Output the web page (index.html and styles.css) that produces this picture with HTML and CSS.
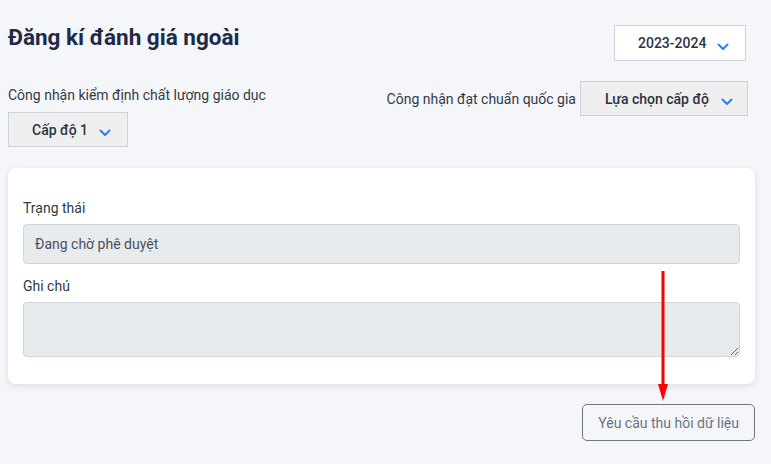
FILE: index.html
```html
<!DOCTYPE html>
<html lang="vi">
<head>
<meta charset="utf-8">
<title>Đăng kí đánh giá ngoài</title>
<link rel="stylesheet" href="styles.css">
</head>
<body>
<div class="page">
  <header class="head">
    <h1 class="title">Đăng kí đánh giá ngoài</h1>
    <div class="select select-white">
      <span>2023-2024</span>
      <svg class="chev" width="12" height="8" viewBox="0 0 12 8"><path d="M1.5 1.5 L6 6 L10.5 1.5" fill="none" stroke="#2f7ef5" stroke-width="2" stroke-linecap="round" stroke-linejoin="round"/></svg>
    </div>
  </header>

  <section class="filters">
    <div class="filter-left">
      <div class="flabel">Công nhận kiểm định chất lượng giáo dục</div>
      <div class="select select-grey sel-level">
        <span>Cấp độ 1</span>
        <svg class="chev" width="12" height="8" viewBox="0 0 12 8"><path d="M1.5 1.5 L6 6 L10.5 1.5" fill="none" stroke="#2f7ef5" stroke-width="2" stroke-linecap="round" stroke-linejoin="round"/></svg>
      </div>
    </div>
    <div class="filter-right">
      <div class="flabel">Công nhận đạt chuẩn quốc gia</div>
      <div class="select select-grey sel-choose">
        <span>Lựa chọn cấp độ</span>
        <svg class="chev" width="12" height="8" viewBox="0 0 12 8"><path d="M1.5 1.5 L6 6 L10.5 1.5" fill="none" stroke="#2f7ef5" stroke-width="2" stroke-linecap="round" stroke-linejoin="round"/></svg>
      </div>
    </div>
  </section>

  <section class="card">
    <label class="label">Trạng thái</label>
    <input class="field" type="text" value="Đang chờ phê duyệt" readonly>
    <label class="label label-gap">Ghi chú</label>
    <textarea class="field area" readonly></textarea>
  </section>

  <div class="actions">
    <button class="btn" type="button">Yêu cầu thu hồi dữ liệu</button>
  </div>

  <svg class="arrow" width="14" height="132" viewBox="0 0 14 132">
    <line x1="7" y1="1" x2="7" y2="118" stroke="#ff0000" stroke-width="3"/>
    <path d="M2 114 L12 114 L7 131 Z" fill="#ff0000"/>
  </svg>
</div>
</body>
</html>
```

FILE: styles.css
```css
* { box-sizing: border-box; }
html, body { margin: 0; padding: 0; }
body {
  background: #f5f6fa;
  font-family: Roboto, "Noto Sans", Arial, sans-serif;
  font-size: 14px;
  color: #333a44;
}
.page {
  position: relative;
  padding: 25px 16px 0 8px;
  width: 771px;
  height: 464px;
}
.head {
  display: flex;
  justify-content: space-between;
  align-items: flex-start;
  padding-right: 9px;
}
.title {
  margin: 0;
  font-size: 22.5px;
  font-weight: 700;
  line-height: 24px;
  color: #1d2a48;
}
.select {
  display: flex;
  align-items: center;
  justify-content: space-between;
  border: 1px solid #ced3db;
  height: 36px;
  padding-left: 23px;
  padding-right: 16px;
  font-weight: 500;
  color: #2c3340;
}
.select span { line-height: 20px; }
.select .chev { margin-top: 7px; }
.select-white {
  background: #ffffff;
  width: 132px;
}
.select-grey {
  background: #efefef;
}
.sel-level { width: 120px; height: 35px; }
.sel-choose { width: 168px; height: 35px; padding-left: 24px; padding-right: 14px; }
.filters {
  display: flex;
  justify-content: space-between;
  align-items: flex-start;
  margin-top: 20px;
  padding-right: 7px;
}
.filter-left { padding-top: 4px; }
.filter-left .flabel { margin-bottom: 7px; }
.flabel { line-height: 20px; color: #333a44; }
.filter-right {
  display: flex;
  align-items: center;
  gap: 4px;
}
.card {
  display: flex;
  flex-direction: column;
  margin-top: 21px;
  background: #ffffff;
  border-radius: 8px;
  box-shadow: 0 2px 6px rgba(30, 40, 80, 0.12);
  padding: 30px 15px 27px 15px;
}
.label {
  line-height: 20px;
  margin-bottom: 6px;
  color: #333a44;
}
.label-gap { margin-top: 12px; }
.field {
  width: 100%;
  height: 40px;
  background: #e8ebee;
  border: 1px solid #cfd4da;
  border-radius: 4px;
  padding: 0 11px;
  font-family: inherit;
  font-size: 14px;
  color: #4a505a;
  outline: none;
}
.area {
  height: 55px;
  resize: vertical;
  display: block;
}
.actions {
  display: flex;
  justify-content: flex-end;
  margin-top: 20px;
}
.btn {
  height: 37px;
  padding: 0 15px;
  background: transparent;
  border: 1px solid #6e7782;
  border-radius: 5px;
  font-family: inherit;
  font-size: 14px;
  color: #6b7480;
}
.arrow {
  position: absolute;
  left: 656px;
  top: 270px;
}
```
